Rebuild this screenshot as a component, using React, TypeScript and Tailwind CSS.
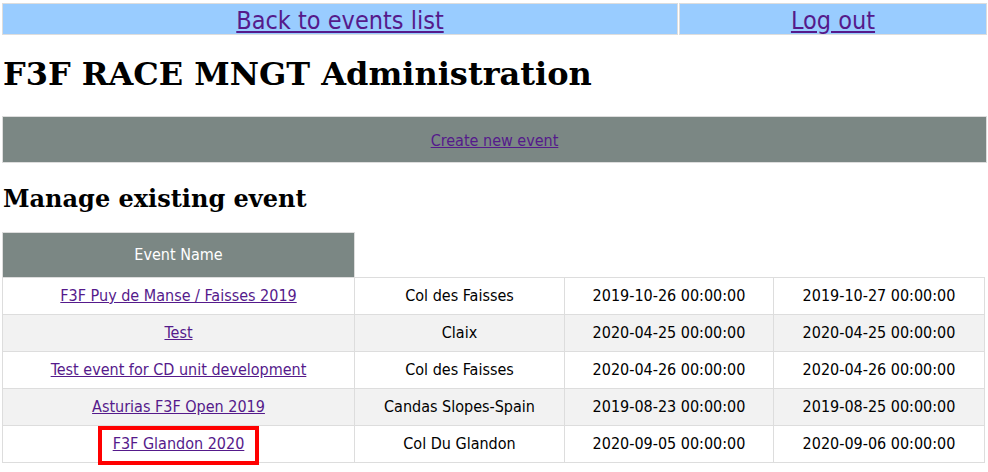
import React from "react";

// F3F race management — admin landing page

type EventRow = {
  name: string;
  location: string;
  start: string;
  end: string;
  marked?: boolean;
};

const EVENTS: EventRow[] = [
  { name: "F3F Puy de Manse / Faisses 2019", location: "Col des Faisses", start: "2019-10-26 00:00:00", end: "2019-10-27 00:00:00" },
  { name: "Test", location: "Claix", start: "2020-04-25 00:00:00", end: "2020-04-25 00:00:00" },
  { name: "Test event for CD unit development", location: "Col des Faisses", start: "2020-04-26 00:00:00", end: "2020-04-26 00:00:00" },
  { name: "Asturias F3F Open 2019", location: "Candas Slopes-Spain", start: "2019-08-23 00:00:00", end: "2019-08-25 00:00:00" },
  { name: "F3F Glandon 2020", location: "Col Du Glandon", start: "2020-09-05 00:00:00", end: "2020-09-06 00:00:00", marked: true },
];

const sans = "font-['DejaVu_Sans_Condensed','DejaVu_Sans',sans-serif]";
const serif = "font-['DejaVu_Serif',serif]";

export default function App() {
  return (
    <div className={`w-[988px] h-[472px] bg-white text-black ${sans} overflow-hidden`}>
      {/* top nav */}
      <div className="ml-[2px] mt-[3px] w-[985px] h-[32px] flex gap-px">
        <div className="w-[676px] border border-[#dddddd] bg-[#99ccff] flex items-center justify-center">
          <a href="#" className="text-[25px] leading-none mt-[2px] text-[#551a8b] underline">
            Back to events list
          </a>
        </div>
        <div className="flex-1 border border-[#dddddd] bg-[#99ccff] flex items-center justify-center">
          <a href="#" className="text-[25px] leading-none mt-[2px] text-[#551a8b] underline">
            Log out
          </a>
        </div>
      </div>

      <h1 className={`${serif} font-bold text-[32px] leading-[37px] mt-[21px] ml-[3px]`}>
        F3F RACE MNGT Administration
      </h1>

      {/* create */}
      <div className="ml-[2px] mt-[23px] w-[985px] h-[47px] border border-[#dddddd] bg-[#7b8784] flex items-center justify-center">
        <a href="#" className="text-[16px] mt-[2px] text-[#551a8b] underline">
          Create new event
        </a>
      </div>

      <h2 className={`${serif} font-bold text-[24px] leading-[28px] mt-[22px] ml-[3px]`}>
        Manage existing event
      </h2>

      <table className="mt-[19px] ml-[2px] border-collapse table-fixed text-[16px]">
        <colgroup>
          <col className="w-[352px]" />
          <col className="w-[210px]" />
          <col className="w-[209px]" />
          <col className="w-[211px]" />
        </colgroup>
        <thead>
          <tr className="h-[45px]">
            <th className="border border-[#dddddd] bg-[#7b8784] text-white font-normal">Event Name</th>
            <th />
            <th />
            <th />
          </tr>
        </thead>
        <tbody>
          {EVENTS.map((ev, i) => (
            <tr key={ev.name} className={`h-[37px] ${i % 2 === 1 ? "bg-[#f2f2f2]" : "bg-white"}`}>
              <td className="border border-[#dddddd] text-center">
                {ev.marked ? (
                  <span className="relative inline-block">
                    <a href="#" className="text-[#551a8b] underline">{ev.name}</a>
                    <span className="absolute -left-[15px] -right-[15px] -top-[6px] -bottom-[9px] border-4 border-[#ff0000] pointer-events-none" />
                  </span>
                ) : (
                  <a href="#" className="text-[#551a8b] underline">{ev.name}</a>
                )}
              </td>
              <td className="border border-[#dddddd] text-center">{ev.location}</td>
              <td className="border border-[#dddddd] text-center">{ev.start}</td>
              <td className="border border-[#dddddd] text-center">{ev.end}</td>
            </tr>
          ))}
        </tbody>
      </table>
    </div>
  );
}
